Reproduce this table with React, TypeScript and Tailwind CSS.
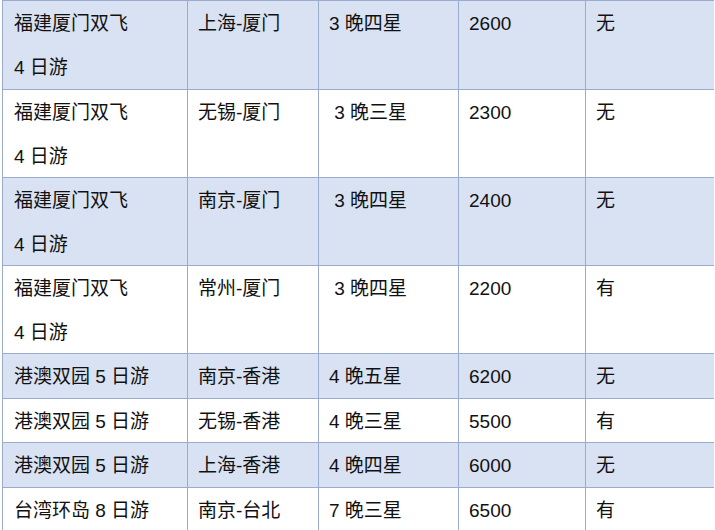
import React from "react";

type Row = { name: string[]; route: string; hotel: string; price: string; extra: string; blue: boolean; h: string };

const rows: Row[] = [
  { name: ["福建厦门双飞", "4 日游"], route: "上海-厦门", hotel: "3 晚四星", price: "2600", extra: "无", blue: true, h: "h-[89px]" },
  { name: ["福建厦门双飞", "4 日游"], route: "无锡-厦门", hotel: "\u00a03 晚三星", price: "2300", extra: "无", blue: false, h: "h-[88px]" },
  { name: ["福建厦门双飞", "4 日游"], route: "南京-厦门", hotel: "\u00a03 晚四星", price: "2400", extra: "无", blue: true, h: "h-[88px]" },
  { name: ["福建厦门双飞", "4 日游"], route: "常州-厦门", hotel: "\u00a03 晚四星", price: "2200", extra: "有", blue: false, h: "h-[88px]" },
  { name: ["港澳双园 5 日游"], route: "南京-香港", hotel: "4 晚五星", price: "6200", extra: "无", blue: true, h: "h-[45px]" },
  { name: ["港澳双园 5 日游"], route: "无锡-香港", hotel: "4 晚三星", price: "5500", extra: "有", blue: false, h: "h-[44px]" },
  { name: ["港澳双园 5 日游"], route: "上海-香港", hotel: "4 晚四星", price: "6000", extra: "无", blue: true, h: "h-[45px]" },
  { name: ["台湾环岛 8 日游"], route: "南京-台北", hotel: "7 晚三星", price: "6500", extra: "有", blue: false, h: "h-[44px]" },
];

export default function App() {
  return (
    <div className="w-[715px] h-[530px] overflow-hidden bg-white">
      <div
        className="ml-[2px] w-[712px] grid grid-cols-[185px_131px_140px_127px_129px] border-r border-[#9aaccd] text-[19px] leading-[44px] text-[#111]"
        style={{ fontFamily: '"Liberation Sans", "Noto Sans CJK SC", sans-serif' }}
      >
        {rows.map((r, i) => {
          const bg = r.blue ? "bg-[#d9e2f3]" : "bg-white";
          const pt = i === 0 ? "pt-[1px]" : "pt-[1px]";
          const cell = `${r.h} ${pt} border-l border-t border-[#9aaccd] ${bg} whitespace-pre`;
          return (
            <React.Fragment key={i}>
              <div className={`${cell} pl-[11px]`}>
                {r.name.map((n, j) => (
                  <div key={j}>{n}</div>
                ))}
              </div>
              <div className={`${cell} pl-[10px]`}>{r.route}</div>
              <div className={`${cell} pl-[10px]`}>{r.hotel}</div>
              <div className={`${cell} pl-[10px]`}>{r.price}</div>
              <div className={`${cell} pl-[10px]`}>{r.extra}</div>
            </React.Fragment>
          );
        })}
      </div>
    </div>
  );
}
